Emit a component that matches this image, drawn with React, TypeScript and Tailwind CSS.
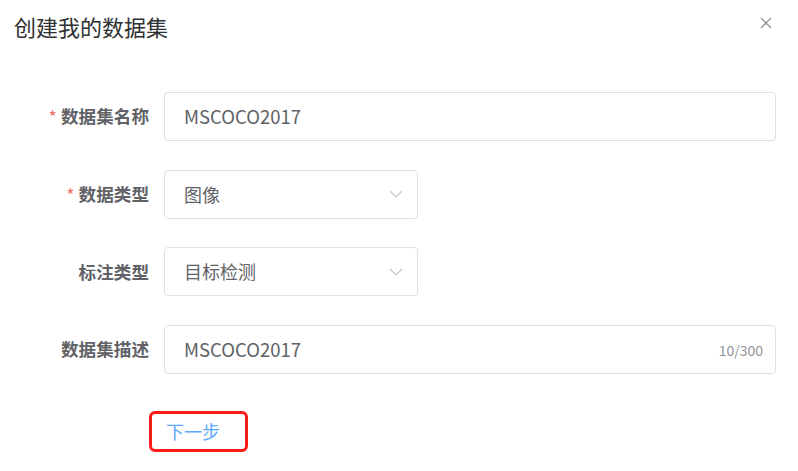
import React from 'react';

const FONT = "font-['Microsoft_YaHei','Noto_Sans_CJK_SC','Noto_Sans',sans-serif]";

function Chevron() {
  return (
    <svg width="14" height="8" viewBox="0 0 14 8" fill="none" className="shrink-0">
      <polyline points="1,1 7,7 13,1" stroke="#c0c4cc" strokeWidth="1.2" />
    </svg>
  );
}

function Label({ text, required }: { text: string; required?: boolean }) {
  return (
    <div className="w-[149px] shrink-0 flex items-center justify-end text-[17.6px] font-bold text-[#606266]">
      {required && <span className="text-[#f56c6c] mr-[4px] text-[18px] font-normal">*</span>}
      {text}
    </div>
  );
}

export default function App() {
  return (
    <div className={`w-[798px] h-[471px] bg-white ${FONT}`}>
      {/* header */}
      <div className="flex items-start justify-between pl-[14px] pr-[26px] pt-[12px]">
        <h2 className="text-[22px] leading-[28px] text-[#303133]">创建我的数据集</h2>
        <svg width="12" height="12" viewBox="0 0 12 12" className="mt-[5px]">
          <path d="M1 1 L11 11 M11 1 L1 11" stroke="#909399" strokeWidth="1.3" />
        </svg>
      </div>

      {/* form */}
      <div className="mt-[52px] flex flex-col gap-[28.7px]">
        <div className="flex items-center h-[49px]">
          <Label text="数据集名称" required />
          <div className="ml-[15px] w-[612px] h-full border border-[#dcdfe6] rounded-[4px] flex items-center pl-[19px] text-[18.5px] text-[#606266]">
            MSCOCO2017
          </div>
        </div>

        <div className="flex items-center h-[49px]">
          <Label text="数据类型" required />
          <div className="ml-[15px] w-[254px] h-full border border-[#dcdfe6] rounded-[4px] flex items-center justify-between pl-[19px] pr-[14px] text-[18px] text-[#606266]">
            <span>图像</span>
            <Chevron />
          </div>
        </div>

        <div className="flex items-center h-[49px]">
          <Label text="标注类型" />
          <div className="ml-[15px] w-[254px] h-full border border-[#dcdfe6] rounded-[4px] flex items-center justify-between pl-[19px] pr-[14px] text-[18px] text-[#606266]">
            <span>目标检测</span>
            <Chevron />
          </div>
        </div>

        <div className="flex items-center h-[49px]">
          <Label text="数据集描述" />
          <div className="ml-[15px] w-[612px] h-full border border-[#dcdfe6] rounded-[4px] flex items-center justify-between pl-[19px] pr-[12px] text-[18.5px] text-[#606266]">
            <span>MSCOCO2017</span>
            <span className="text-[14px] text-[#909399] pt-[2px]">10/300</span>
          </div>
        </div>
      </div>

      {/* next step */}
      <div className="mt-[37px] pl-[149px]">
        <div className="w-[99px] h-[41px] border-[3px] border-[#ff1a1a] rounded-[6px] flex items-center pl-[14px] text-[18px] text-[#5aa8ff]">
          下一步
        </div>
      </div>
    </div>
  );
}
